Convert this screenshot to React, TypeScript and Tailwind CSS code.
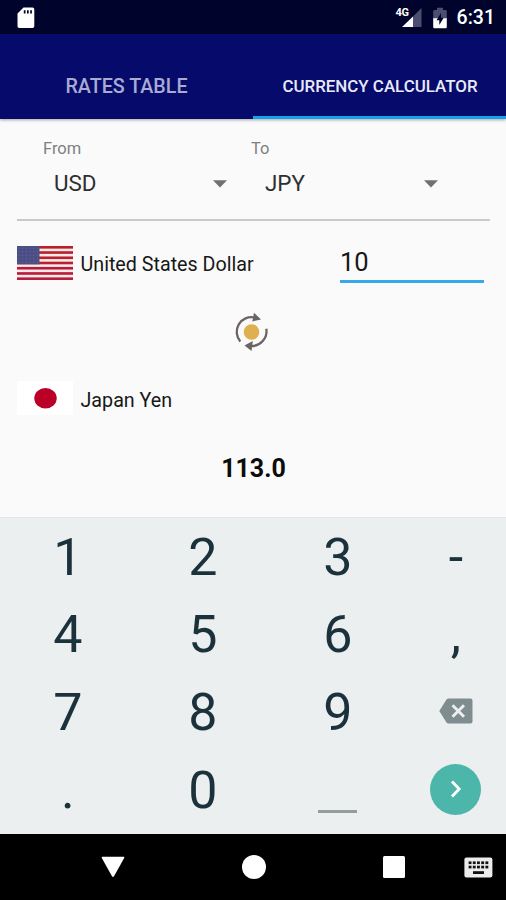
import type { ReactNode } from 'react';

const StatusBar = () => (
  <div className="flex h-[34px] items-center bg-[#00032b] pt-px pl-[17px] pr-[11px] text-white">
    <svg width="18" height="22" viewBox="0 0 18 22">
      <path d="M6.5 0.5H15.5a1.8 1.8 0 0 1 1.8 1.8V19.2a1.8 1.8 0 0 1-1.8 1.8H2.3A1.8 1.8 0 0 1 .5 19.2V6.5z" fill="#fff" />
      <path d="M6.8 3.2h1.7v3.4H6.8zM10 3.2h1.7v3.4H10zM13.2 3.2h1.7v3.4h-1.7z" fill="#00032b" />
    </svg>
    <div className="ml-auto flex items-center">
      <div className="relative h-[22px] w-[28px]">
        <span className="absolute left-0 top-0 text-[11px] leading-[11px] font-bold tracking-[-0.5px]">4G</span>
        <svg className="absolute left-0 top-0" width="28" height="22" viewBox="0 0 28 22">
          <path d="M25.5 1V20H17V9.5z" fill="#4c4e70" />
          <path d="M6 20L17 9.5V20z" fill="#fff" />
        </svg>
      </div>
      <svg className="ml-[9px] mr-px" width="14" height="22" viewBox="0 0 14 22">
        <path d="M4 0.7h6V3h2.5A1.3 1.3 0 0 1 13.8 4.3V12H.2V4.3A1.3 1.3 0 0 1 1.5 3H4z" fill="#4c4e70" />
        <path d="M.2 11.3H13.8V20a1.3 1.3 0 0 1-1.3 1.3h-11A1.3 1.3 0 0 1 .2 20z" fill="#fff" />
        <path d="M8 6L3.5 13.3h2.8V18l4.4-7.3H8z" fill="#00032b" />
      </svg>
      <span className="mt-px ml-[9px] text-[19.5px] leading-[34px] font-medium">6:31</span>
    </div>
  </div>
);

const Tabs = () => (
  <div className="z-10 flex h-[84.5px] bg-[#060b6b] pt-[16px] font-medium shadow-[0_1px_3px_rgba(0,0,0,0.35)]">
    <button className="w-[253px] pt-[5px] text-[19.7px] text-[#a9abd2]">RATES TABLE</button>
    <button className="w-[253px] border-b-[3px] border-[#16a0ec] pt-[8px] pl-px text-[16.9px] text-[#e9eaf8]">
      CURRENCY CALCULATOR
    </button>
  </div>
);

const Caret = () => (
  <svg width="14" height="8" viewBox="0 0 14 8">
    <path d="M0 .3h14L7 7.6z" fill="#707070" />
  </svg>
);

const CurrencySelect = ({ label, value, labelClass = '' }: { label: string; value: string; labelClass?: string }) => (
  <div className="w-[211px]">
    <div className={`h-[20px] text-[16.5px] leading-[20px] text-[#808080] ${labelClass}`}>{label}</div>
    <div className="flex h-[50px] items-center justify-between pr-[27px] pl-[11px] text-[22.4px] text-[#2f2f2f]">
      {value}
      <Caret />
    </div>
  </div>
);

const UsFlag = () => (
  <svg width="56" height="34" viewBox="0 0 56 34">
    <rect width="56" height="34" fill="#fbe9ea" />
    {[0, 1, 2, 3, 4, 5, 6].map((i) => (
      <rect key={i} y={i * 5.23} width="56" height="2.62" fill={i > 3 ? '#b51d3b' : '#b8212c'} />
    ))}
    <rect width="22.5" height="18.3" fill="#4b4e84" />
    {[0, 1, 2, 3, 4].map((row) =>
      [0, 1, 2, 3, 4, 5].map((col) => (
        <circle key={`${row}-${col}`} cx={2 + col * 3.7} cy={2 + row * 3.6} r="0.6" fill="#686b99" />
      ))
    )}
  </svg>
);

const JapanFlag = () => (
  <svg width="56" height="34" viewBox="0 0 56 34">
    <rect width="56" height="34" fill="#fff" />
    <ellipse cx="28.5" cy="17.3" rx="11.2" ry="10.2" fill="#ba0027" />
  </svg>
);

const SwapIcon = () => (
  <svg width="34" height="40" viewBox="0 0 34 40">
    <circle cx="16.5" cy="20" r="7.8" fill="#deb050" />
    <g fill="none" stroke="#6b6462" strokeWidth="2.3">
      <path d="M5.3 29.5A14.7 14.7 0 0 1 19.5 5.5" />
      <path d="M31.3 16.8A14.8 14.8 0 0 1 16 34" />
    </g>
    <path d="M19 .8L26 7.4 17.3 9.4z" fill="#6b6462" />
    <path d="M9.5 33.4L17.8 29 16.5 39z" fill="#6b6462" />
  </svg>
);

const BackspaceIcon = () => (
  <svg className="mb-[4px]" width="34" height="26" viewBox="0 0 34 26">
    <path d="M9.5.5H31.5a2 2 0 0 1 2 2V23.5a2 2 0 0 1-2 2H9.5a2.5 2.5 0 0 1-2-1L.3 13 7.5 1.5a2.5 2.5 0 0 1 2-1z" fill="#7f8d90" />
    <path d="M13.5 7.2L25 18.7M25 7.2L13.5 18.7" stroke="#eceff0" strokeWidth="2.9" />
  </svg>
);

const keys: { id: string; content: ReactNode }[] = [
  { id: '1', content: '1' },
  { id: '2', content: '2' },
  { id: '3', content: '3' },
  { id: 'minus', content: '-' },
  { id: '4', content: '4' },
  { id: '5', content: '5' },
  { id: '6', content: '6' },
  { id: 'comma', content: ',' },
  { id: '7', content: '7' },
  { id: '8', content: '8' },
  { id: '9', content: '9' },
  { id: 'backspace', content: <BackspaceIcon /> },
  { id: 'dot', content: '.' },
  { id: '0', content: '0' },
  { id: 'space', content: <span className="mt-[41px] h-[3px] w-[39px] bg-[#959c9e]" /> },
  {
    id: 'next',
    content: (
      <span className="mb-[3px] flex h-[51px] w-[51px] items-center justify-center rounded-full bg-[#4db6ab]">
        <svg width="12" height="18" viewBox="0 0 12 18">
          <path d="M2 1.5L9.2 9 2 16.5" fill="none" stroke="#fff" strokeWidth="2.8" />
        </svg>
      </span>
    ),
  },
];

const Keypad = () => (
  <div className="h-[317px] border-t border-[#e4e7e8] bg-[#eceff0]">
    <div className="grid grid-cols-[135px_135px_135px_101px] grid-rows-[repeat(4,77.6px)] pt-px pl-[0.4px] text-[52px] leading-none text-[#1b323c]">
      {keys.map((key) => (
        <button key={key.id} className="flex items-center justify-center">
          {key.content}
        </button>
      ))}
    </div>
  </div>
);

const NavBar = () => (
  <div className="flex h-[66px] items-center bg-black pl-[101px]">
    <svg width="24" height="22" viewBox="0 0 24 22">
      <path d="M1.5.8h21q1.4 0 .7 1.3L13 20.2q-1 1.6-2 0L.8 2.1Q.1.8 1.5.8z" fill="#fff" />
    </svg>
    <span className="ml-[116.5px] h-[24px] w-[24px] rounded-full bg-white" />
    <span className="ml-[117.5px] h-[22px] w-[21.5px] rounded-[1.5px] bg-white" />
    <svg className="ml-[59px]" width="29" height="21" viewBox="0 0 29 21">
      <rect x=".4" y=".4" width="28" height="20" rx="2.2" fill="#ececec" />
      {[0, 1, 2, 3, 4].map((i) => (
        <g key={i} fill="#111">
          <rect x={4.6 + i * 4.2} y="4.4" width="2.9" height="2.7" />
          <rect x={4.6 + i * 4.2} y="8.7" width="2.9" height="2.7" />
        </g>
      ))}
      <rect x="9" y="14.2" width="11" height="2.8" fill="#111" />
    </svg>
  </div>
);

const App = () => {
  return (
    <div className="flex h-[900px] w-[506px] flex-col overflow-hidden bg-[#fafafa] font-['Roboto',sans-serif]">
      <StatusBar />
      <Tabs />

      <main className="flex h-[398.5px] flex-col">
        <div className="flex pt-[20.5px] pl-[43px]">
          <CurrencySelect label="From" value="USD" />
          <CurrencySelect label="To" value="JPY" labelClass="-ml-[3px]" />
        </div>
        <div className="mx-[17px] mt-[10px] h-[2px] w-[473px] bg-[#c9c9c9]" />

        <div className="mt-[17px] flex h-[45px] pl-[17px]">
          <div className="flex h-[50px] w-[323px] items-center">
            <UsFlag />
            <span className="mt-[3px] ml-[7.5px] text-[19.7px] text-[#171717]">United States Dollar</span>
          </div>
          <div className="w-[144px] border-b-[3px] border-[#36a9ec] text-[25.5px] leading-[48px] text-[#171717]">10</div>
        </div>

        <div className="mt-[29px] flex h-[40px] pl-[235px]">
          <SwapIcon />
        </div>

        <div className="mt-[29px] flex h-[34px] items-center pl-[17px]">
          <JapanFlag />
          <span className="mt-[5px] ml-[7.5px] text-[19.7px] text-[#171717]">Japan Yen</span>
        </div>

        <div className="mt-[38px] pl-px text-center text-[25px] leading-[32px] font-bold text-[#0c0c0c]">113.0</div>
      </main>

      <Keypad />
      <NavBar />
    </div>
  );
};

export default App;
